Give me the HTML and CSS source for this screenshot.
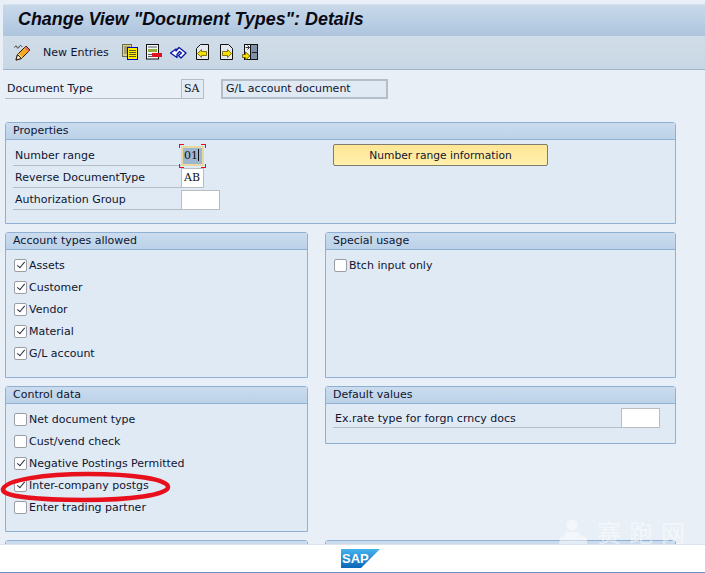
FILE: index.html
```html
<!DOCTYPE html>
<html lang="en">
<head>
  <meta charset="UTF-8" />
  <meta name="viewport" content="width=device-width, initial-scale=1.0"/>
  <title>Change View "Document Types": Details</title>
  <link rel="stylesheet" href="styles.css">
</head>
<body>
  <div class="screen">
    <header class="title-bar">
      <h1>Change View "Document Types": Details</h1>
    </header>

    <nav class="toolbar">
      <svg class="icon icon-pencil" width="18" height="17" viewBox="0 0 18 17">
        <path d="M0.500 3.500c1-2 2-2 2.500-0.500s1 2 2 0 2-2 3 0" fill="none" stroke="#333" stroke-width="1"/>
        <path d="M2 16l1.500-5.500 8.500-8.500 4 4-8.500 8.500z" fill="#f6a81e" stroke="#2a1a08" stroke-width="1"/>
        <path d="M4 10l4 4" stroke="#fbe08a" stroke-width="1.500"/>
        <path d="M2 16l1.500-5.500 4 4z" fill="#f8ead6" stroke="#2a1a08" stroke-width="1"/>
        <path d="M11 3l4 4" stroke="#e06a70" stroke-width="2"/>
      </svg>
      <span class="toolbar-text">New Entries</span>
      <svg class="icon icon-copy" width="16" height="16" viewBox="0 0 16 16">
        <rect x="0.500" y="0.500" width="9" height="12" fill="#d8cf88" stroke="#6a6a50"/>
        <path d="M2 3h6M2 5h3M2 7h3M2 9h3" stroke="#77724a"/>
        <rect x="5.500" y="3.500" width="10" height="12" fill="#fff000" stroke="#0000c8"/>
        <path d="M7 6.500h7M7 8.500h7M7 10.500h7M7 12.500h7" stroke="#5a5a20"/>
      </svg>
      <svg class="icon icon-delete" width="16" height="16" viewBox="0 0 16 16">
        <rect x="0.500" y="0.500" width="12" height="14.500" fill="#f4f6f8" stroke="#111"/>
        <rect x="2" y="2.500" width="9" height="1" fill="#556"/>
        <rect x="2" y="5" width="9" height="3" fill="#8fae3c"/>
        <rect x="2" y="10" width="4" height="1" fill="#556"/>
        <rect x="2" y="12" width="4" height="1" fill="#556"/>
        <rect x="6" y="9" width="10" height="4" fill="#e0101c"/>
      </svg>
      <svg class="icon icon-undo" width="17" height="16" viewBox="0 0 17 16">
        <path d="M0.500 9l5.500-4v2l3-3.500 7 5.500-5 5-2.500-2.500 3-2.500-2-1.500-2.500 3v3z" fill="#fff" stroke="#0a14a8" stroke-width="1.300" stroke-linejoin="round"/>
      </svg>
      <svg class="icon icon-prev" width="13" height="16" viewBox="0 0 13 16">
        <path d="M0.500 4.500l4-4h8v15h-12z" fill="#e4eaf0" stroke="#111"/>
        <path d="M1.500 9.500l4-4v2h5v4h-5v2z" fill="#f6e000" stroke="#6a5a00" stroke-width="0.800"/>
      </svg>
      <svg class="icon icon-next" width="13" height="16" viewBox="0 0 13 16">
        <path d="M0.500 0.500h8l4 4v11h-12z" fill="#e4eaf0" stroke="#111"/>
        <path d="M11.500 9.500l-4-4v2h-5v4h5v2z" fill="#f6e000" stroke="#6a5a00" stroke-width="0.800"/>
      </svg>
      <svg class="icon icon-other" width="16" height="16" viewBox="0 0 16 16">
        <rect x="2.500" y="0.500" width="13" height="15" fill="#e8edf2" stroke="#111"/>
        <rect x="8.500" y="0.500" width="7" height="15" fill="#7f90a8" stroke="#111"/>
        <path d="M10 8.500h5" stroke="#222"/>
        <path d="M3.500 3.500h4M5.500 1.500l2 2-2 2" fill="none" stroke="#334"/>
        <path d="M0.500 10.500h3v-2.500l4.500 4-4.500 4v-2.500h-3z" fill="#f6e000" stroke="#5a4a00" stroke-width="0.800"/>
      </svg>
    </nav>

    <main class="content">
      <div class="doc-row">
        <span class="label doc-label">Document Type</span>
        <span class="field field-mono field-short">SA</span>
        <span class="field field-display">G/L account document</span>
      </div>

      <div class="panels">
        <section class="panel panel-wide panel-properties">
          <h2>Properties</h2>
          <div class="panel-columns">
            <div class="form-rows">
              <div class="row">
                <span class="label">Number range</span>
                <span class="focus-wrap">
                  <span class="field field-mono field-short field-focus">01<i class="caret"></i></span>
                  <i class="corner corner-tl"></i><i class="corner corner-tr"></i>
                  <i class="corner corner-bl"></i><i class="corner corner-br"></i>
                </span>
              </div>
              <div class="row">
                <span class="label">Reverse DocumentType</span>
                <span class="field field-mono field-short">AB</span>
              </div>
              <div class="row">
                <span class="label">Authorization Group</span>
                <span class="field field-mid"></span>
              </div>
            </div>
            <button class="range-btn" type="button">Number range information</button>
          </div>
        </section>

        <section class="panel panel-tall">
          <h2>Account types allowed</h2>
          <ul class="checks">
            <li><span class="box checked"></span>Assets</li>
            <li><span class="box checked"></span>Customer</li>
            <li><span class="box checked"></span>Vendor</li>
            <li><span class="box checked"></span>Material</li>
            <li><span class="box checked"></span>G/L account</li>
          </ul>
        </section>

        <section class="panel panel-tall">
          <h2>Special usage</h2>
          <ul class="checks">
            <li><span class="box"></span>Btch input only</li>
          </ul>
        </section>

        <section class="panel panel-tall">
          <h2>Control data</h2>
          <ul class="checks">
            <li><span class="box"></span>Net document type</li>
            <li><span class="box"></span>Cust/vend check</li>
            <li><span class="box checked"></span>Negative Postings Permitted</li>
            <li><span class="box checked"></span>Inter-company postgs</li>
            <li><span class="box"></span>Enter trading partner</li>
          </ul>
        </section>

        <section class="panel panel-default">
          <h2>Default values</h2>
          <div class="row row-default">
            <span class="label">Ex.rate type for forgn crncy docs</span>
            <span class="field field-mid"></span>
          </div>
        </section>

        <section class="panel panel-cut"><h2>&nbsp;</h2></section>
        <section class="panel panel-cut"><h2>&nbsp;</h2></section>
      </div>
    </main>

    <svg class="red-ring" width="172" height="32" viewBox="0 0 172 32">
      <path d="M3 18C6 9 44 3 88 3c44 0 80 5 80 13 0 8-38 13-84 13C42 29 1 26 3 18z" fill="none" stroke="#e8101c" stroke-width="4.500"/>
    </svg>

    <div class="watermark">
      <svg width="30" height="26" viewBox="0 0 30 26">
        <circle cx="14" cy="6" r="5.500" fill="#fff"/>
        <path d="M8 13h12l3 4 6 2v6H1l1-6 4-2z" fill="#fff"/>
      </svg>
      <span>赛跑网</span>
    </div>

    <footer class="status-bar">
      <svg class="sap-logo" width="39" height="19" viewBox="0 0 39 19">
        <defs>
          <linearGradient id="sapBlue" x1="0" y1="0" x2="0" y2="1">
            <stop offset="0" stop-color="#45b4ee"/>
            <stop offset="1" stop-color="#0a66b8"/>
          </linearGradient>
        </defs>
        <polygon points="0,0 39,0 20,19 0,19" fill="url(#sapBlue)"/>
        <text x="1" y="14" class="sap-text">SAP</text>
      </svg>
    </footer>
  </div>
</body>
</html>
```

FILE: styles.css
```css
html, body {
  margin: 0;
  padding: 0;
}
body {
  background: #e8eff7;
  font-family: "DejaVu Sans", sans-serif;
  font-size: 11px;
  color: #101530;
}
.screen {
  position: relative;
  width: 705px;
  height: 573px;
  overflow: hidden;
  display: flex;
  flex-direction: column;
}
.title-bar {
  height: 32px;
  margin: 4px 0 0 3px;
  background: linear-gradient(#c9d9ea, #adc5de);
  border-top: 1px solid #d8e3ef;
  box-sizing: border-box;
  display: flex;
  align-items: center;
  padding: 0 0 3px 15px;
}
.title-bar h1 {
  margin: 0;
  font-family: "Liberation Sans", sans-serif;
  font-size: 17.900px;
  font-weight: bold;
  font-style: italic;
  color: #0a0a14;
}
.toolbar {
  height: 34px;
  margin-left: 3px;
  box-sizing: border-box;
  background: linear-gradient(#d0dde9, #c9d7e4);
  border-bottom: 1px solid #9fb4c9;
  display: flex;
  align-items: center;
  padding: 0 0 1px 11px;
}
.icon {
  flex: none;
  display: block;
}
.toolbar-text {
  width: 66px;
  margin: 0 13px 0 11px;
  white-space: nowrap;
}
.icon-delete { margin-left: 8px; }
.icon-undo { margin-left: 8px; }
.icon-prev { margin-left: 9px; }
.icon-next { margin-left: 11px; }
.icon-other { margin-left: 9px; }

.content {
  flex: 1;
  min-height: 0;
  overflow: hidden;
  padding: 9px 29px 0 5px;
}
.doc-row {
  display: flex;
  align-items: flex-end;
  height: 20px;
  margin-bottom: 23px;
}
.label {
  display: block;
  flex: none;
  box-sizing: border-box;
  width: 168px;
  height: 20px;
  line-height: 19px;
  padding-left: 2px;
  border-bottom: 1px solid #b4bcc6;
}
.doc-label {
  width: 176px;
}
.field {
  display: block;
  flex: none;
  box-sizing: border-box;
  height: 20px;
  line-height: 17px;
  border: 1px solid #b9bdc2;
  background: #fff;
}
.field-mono {
  font-family: "DejaVu Serif", serif;
  font-size: 11px;
  color: #111;
  padding-left: 2px;
}
.field-short { width: 23px; }
.field-mid { width: 39px; }
.doc-row .field-short {
  background: #e2ebf4;
}
.field-display {
  width: 167px;
  margin-left: 17px;
  padding-left: 3px;
  background: #dfeaf4;
  border: 2px solid #b5bdc6;
  line-height: 16px;
}

.panels {
  display: grid;
  grid-template-columns: 303px 351px;
  column-gap: 17px;
  row-gap: 8px;
  align-items: start;
}
.panel {
  box-sizing: border-box;
  background: #dfeaf5;
  border: 1px solid #8fb0d2;
  border-radius: 3px 3px 0 0;
}
.panel h2 {
  margin: 0;
  height: 17px;
  line-height: 16px;
  padding-left: 7px;
  font-size: 11px;
  font-weight: normal;
  box-sizing: border-box;
  background: linear-gradient(#cbdcee, #bbd2e8);
  border-bottom: 1px solid #8fb0d2;
}
.panel-wide {
  grid-column: 1 / 3;
  height: 102px;
}
.panel-tall { height: 146px; }
.panel-default { height: 58px; }
.panel-cut { height: 60px; }

.panel-columns {
  display: flex;
  align-items: flex-start;
}
.form-rows {
  width: 327px;
  padding: 4px 0 0 7px;
  box-sizing: border-box;
}
.row {
  display: flex;
  align-items: flex-end;
  height: 22px;
}
.row-default {
  margin: 2px 0 0 7px;
  width: 327px;
}
.row-default .label {
  width: 288px;
  line-height: 21px;
}
.focus-wrap {
  position: relative;
  display: block;
  flex: none;
}
.field-focus {
  background: #9fb6d0;
  border: 2px solid #e8d9a0;
  padding-left: 1px;
  line-height: 16px;
}
.caret {
  display: inline-block;
  width: 1px;
  height: 12px;
  vertical-align: -2px;
  background: #111;
}
.corner {
  position: absolute;
  width: 4px;
  height: 3px;
  border: 0 solid #e01020;
}
.corner-tl { left: -2px; top: -2px; border-width: 1px 0 0 1px; }
.corner-tr { right: -2px; top: -2px; border-width: 1px 1px 0 0; }
.corner-bl { left: -2px; bottom: -2px; border-width: 0 0 1px 1px; }
.corner-br { right: -2px; bottom: -2px; border-width: 0 1px 1px 0; }

.range-btn {
  margin-top: 4px;
  width: 215px;
  height: 22px;
  padding: 0;
  font-family: inherit;
  font-size: 10.700px;
  color: inherit;
  background: linear-gradient(#ffe695, #fff0ac);
  border: 1px solid #7f7d70;
  border-radius: 2px;
}

.checks {
  list-style: none;
  margin: 0;
  padding: 4px 0 0 8px;
}
.checks li {
  display: flex;
  align-items: center;
  height: 22px;
}
.box {
  position: relative;
  flex: none;
  box-sizing: border-box;
  width: 13px;
  height: 13px;
  margin-right: 2px;
  background: #fff;
  border: 1px solid #9a9da2;
  border-radius: 2px;
}
.box.checked::after {
  content: "";
  position: absolute;
  left: 3.500px;
  top: 0.500px;
  width: 3px;
  height: 7px;
  border: solid #2a3040;
  border-width: 0 1.500px 1.500px 0;
  transform: rotate(40deg);
}

.red-ring {
  position: absolute;
  left: 0;
  top: 471px;
}
.watermark {
  position: absolute;
  left: 558px;
  top: 519px;
  display: flex;
  align-items: center;
  gap: 9px;
  color: #fff;
  opacity: 0.5;
  font-family: "Noto Sans CJK SC", sans-serif;
  font-size: 24px;
  letter-spacing: 8px;
  line-height: 26px;
  white-space: nowrap;
}
.status-bar {
  position: absolute;
  left: 0;
  right: 0;
  top: 544px;
  height: 29px;
  box-sizing: border-box;
  background: #fff;
  border-top: 1px solid #dde3ea;
  border-bottom: 1px solid #6f8fc0;
  display: flex;
  justify-content: center;
  padding: 4px 0 0 16px;
}
.sap-logo {
  display: block;
}
.sap-text {
  font-family: "Liberation Sans", sans-serif;
  font-size: 13px;
  font-weight: bold;
  fill: #fff;
}
```
